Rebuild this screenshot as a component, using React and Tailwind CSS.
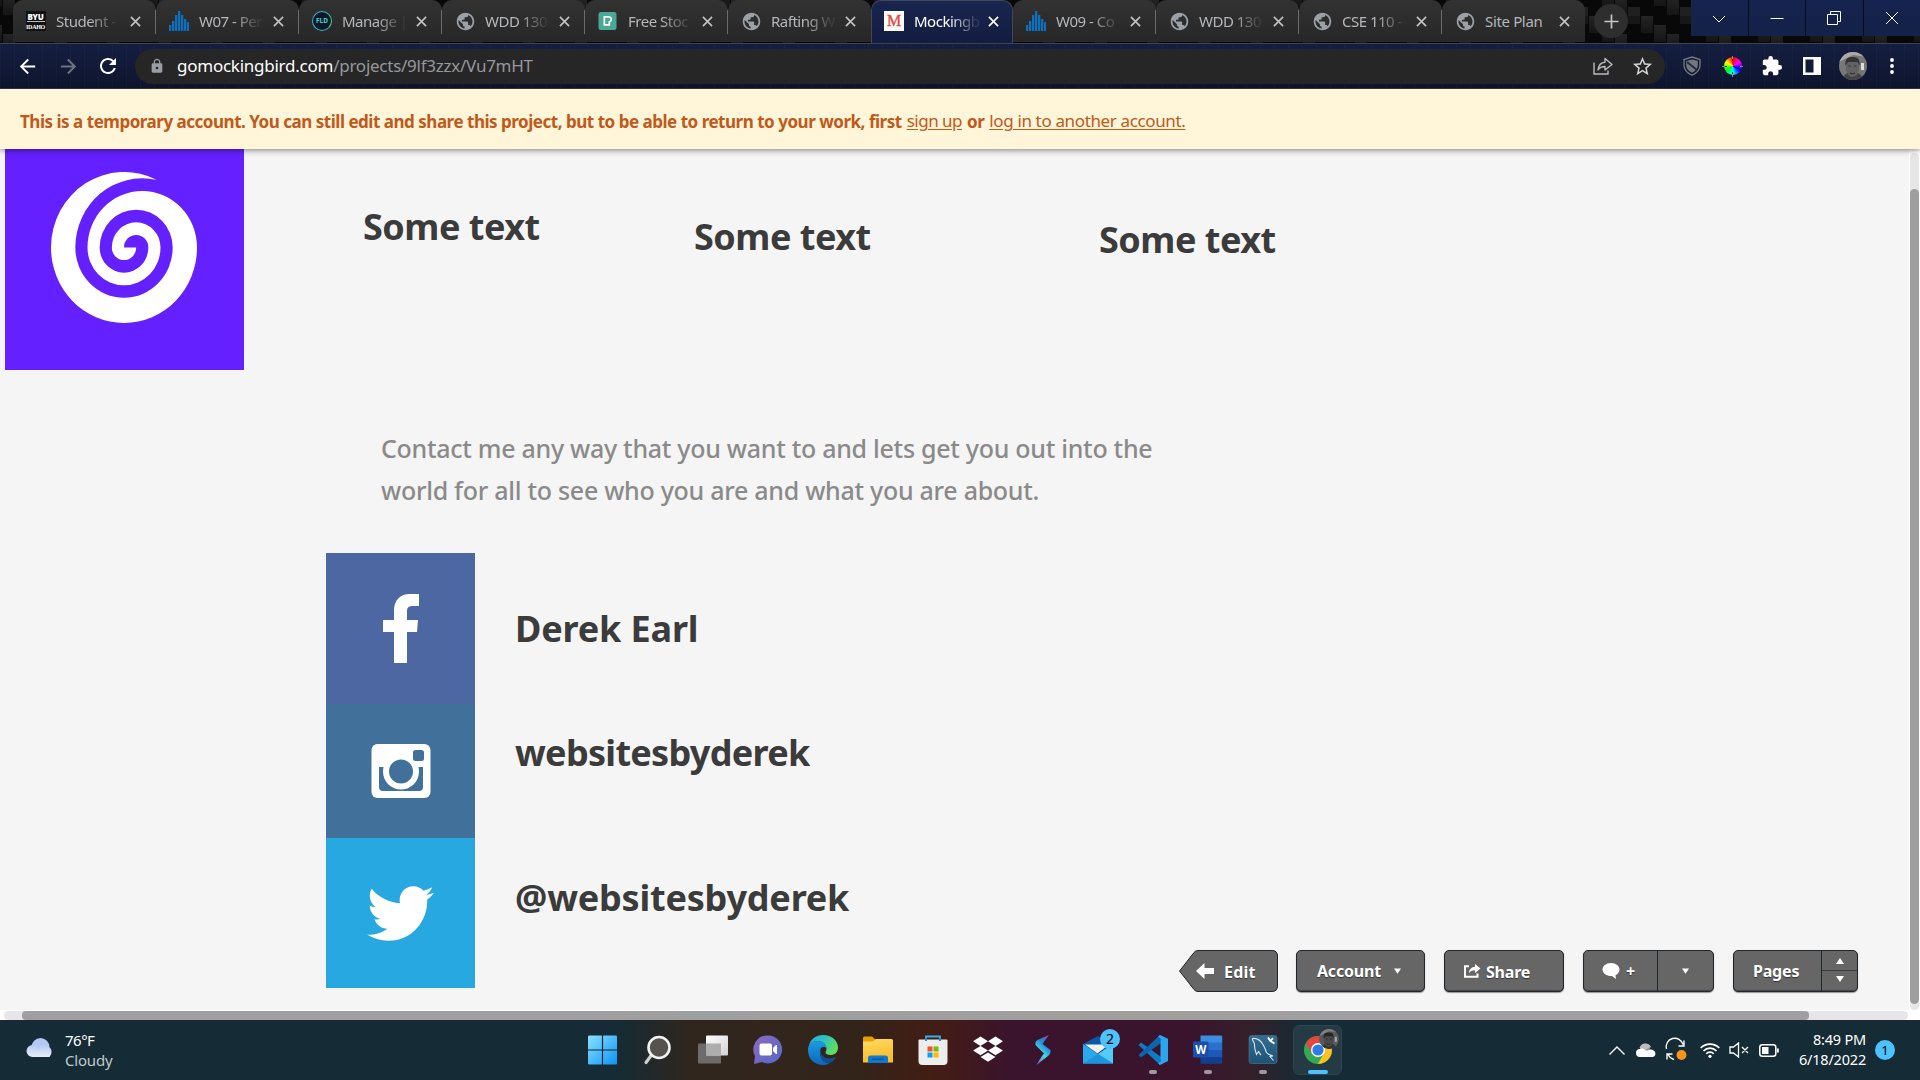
import React from "react";
import { MdPublic, MdExtension, MdLock, MdRefresh, MdArrowBack, MdArrowForward, MdStarBorder } from "react-icons/md";
import { FaTwitter } from "react-icons/fa";

const BarsIcon = () => (
  <svg viewBox="0 0 20 20" className="size-5" fill="#0b70bd">
    <path d="M0 14h2.300v6H0zM3 10h2.300v10H3zM6 4h2.300v16H6zM9 0h2.300v20H9zM12 4h2.300v16H12zM15 8h2.300v12H15zM18 11h2.300v9H18z" />
  </svg>
);

const ByuIcon = () => (
  <div className="-ml-px flex size-5 flex-col items-center bg-[#111] text-white">
    <span className="h-[10px] text-[8px] font-black leading-[11px] tracking-[-0.2px]">BYU</span>
    <span className="h-px w-[18px] bg-[#bbb]" />
    <span className="mt-[2px] font-['Liberation_Serif',serif] text-[6px] font-bold leading-[6px] tracking-[-0.3px]">IDAHO</span>
  </div>
);

const FldIcon = () => (
  <div className="flex size-5 items-center justify-center rounded-full border-[1.5px] border-[#35b3d4] border-r-[#3fd0a4] bg-[#0d1a24] text-[6.5px] font-extrabold text-[#3fc0d8]">
    FLD
  </div>
);

const PexelsIcon = () => (
  <svg viewBox="0 0 20 20" className="size-5">
    <rect x="0.5" y="1" width="18" height="18" rx="2.500" fill="#4aa896" />
    <path fillRule="evenodd" d="M5.500 5h5.300a3.300 3.300 0 0 1 1.400 6.300V14.800H5.500zM7.200 6.700v6.400h3.300V9.900h.5a1.600 1.600 0 0 0 0-3.200z" fill="#fff" />
  </svg>
);

const MIcon = () => (
  <div className="flex size-5 items-center justify-center bg-white font-['Liberation_Serif',serif] text-[16px] leading-5 text-[#e04a41] [-webkit-text-stroke:0.4px_#e04a41]">
    M
  </div>
);

const GlobeIcon = () => <MdPublic className="size-[21px] shrink-0 text-[#9aa0a6]" />;

const CloseX = ({ className }) => (
  <svg viewBox="0 0 12 12" className={className} stroke="currentColor" strokeWidth="1.8">
    <path d="M1 1l10 10M11 1L1 11" />
  </svg>
);

const tabs = [
  { icon: ByuIcon, title: "Student -" },
  { icon: BarsIcon, title: "W07 - Per" },
  { icon: FldIcon, title: "Manage |" },
  { icon: GlobeIcon, title: "WDD 130" },
  { icon: PexelsIcon, title: "Free Stoc" },
  { icon: GlobeIcon, title: "Rafting W" },
  { icon: MIcon, title: "Mockingb", active: true },
  { icon: BarsIcon, title: "W09 - Co" },
  { icon: GlobeIcon, title: "WDD 130" },
  { icon: GlobeIcon, title: "CSE 110 -" },
  { icon: GlobeIcon, title: "Site Plan", full: true },
];

function Tab({ icon: Icon, title, active, full, divider }) {
  return (
    <div
      className={
        active
          ? "relative flex h-[43px] w-[142px] items-center rounded-t-[10px] border border-b-0 border-[#42465a] bg-linear-to-b from-[#1a2550] to-[#131d40] pb-0.5 pl-[12px]"
          : "relative flex h-[42px] w-[143px] items-center rounded-t-[10px] bg-linear-to-b from-[#323232] to-[#272727] pl-[13px]"
      }
    >
      <div className="flex w-5 shrink-0 justify-center">
        <Icon />
      </div>
      <div
        className={
          (active ? "text-white " : "text-[#b4b6b9] ") +
          (full ? "tracking-[-0.35px] " : "tracking-[-0.5px] [mask-image:linear-gradient(to_right,black_52%,rgba(0,0,0,0.12)_92%)] ") +
          "ml-[10px] w-[66px] shrink-0 text-[15px] leading-5 whitespace-nowrap"
        }
      >
        {title}
      </div>
      <CloseX className={active ? "ml-[8px] size-[11px] text-white" : "ml-[8px] size-[11px] text-[#c0c2c4]"} />
      {divider && <span className="absolute right-0 top-[10px] h-6 w-px bg-[#6b6b6b]" />}
    </div>
  );
}

function CarbonPattern() {
  return (
    <svg className="absolute inset-0 size-full">
      <defs>
        <linearGradient id="weave" x1="0" x2="0" y1="0" y2="1">
          <stop offset="0" stopColor="#242424" />
          <stop offset="1" stopColor="#151515" />
        </linearGradient>
        <pattern id="carbon" width="52" height="36" x="1588" y="-20" patternUnits="userSpaceOnUse">
          <rect width="52" height="36" fill="#080808" />
          <rect x="1" width="12" height="17" fill="url(#weave)" />
          <rect x="14" y="9" width="12" height="17" fill="url(#weave)" />
          <rect x="27" y="18" width="12" height="17" fill="url(#weave)" />
          <rect x="40" y="27" width="12" height="9" fill="#202020" />
          <rect x="40" y="0" width="12" height="8" fill="#171717" />
        </pattern>
      </defs>
      <rect width="100%" height="100%" fill="url(#carbon)" />
    </svg>
  );
}

const controlIcons = [
  "M1 5l6 6 6-6",
  "M0.5 7.5h13",
  "M0.5 3.5h10v10h-10z M3.5 3.5v-3h10v10h-3",
  "M1 1l12 12M13 1L1 13",
];

function TabStrip() {
  return (
    <div className="relative flex h-[43px] bg-[#070707]">
      <CarbonPattern />
      <div className="relative flex pl-[13px]">
        {tabs.map((t, i) => (
          <Tab key={i} {...t} divider={i !== 5 && i !== 6 && i !== 10} />
        ))}
      </div>
      <div className="relative ml-[9px] mt-1 flex size-[34px] items-center justify-center rounded-full bg-[#2e2e2e]">
        <svg viewBox="0 0 16 16" className="size-[15px]" stroke="#c4c4c4" strokeWidth="1.8">
          <path d="M8 0.5v15M0.5 8h15" />
        </svg>
      </div>
      <div className="relative ml-auto flex h-9 w-[229px] gap-px bg-[#080d1c]">
        {controlIcons.map((d, i) => (
          <div key={i} className="flex flex-1 items-center justify-center bg-linear-to-b from-[#15234f] to-[#142148]">
            <svg viewBox="0 0 14 14" className="size-[14px]" fill="none" stroke="#fff" strokeWidth="1">
              <path d={d} />
            </svg>
          </div>
        ))}
      </div>
    </div>
  );
}

const Portrait = ({ className }) => (
  <svg viewBox="0 0 28 28" className={className}>
    <defs>
      <clipPath id="round">
        <circle cx="14" cy="14" r="14" />
      </clipPath>
    </defs>
    <g clipPath="url(#round)">
      <rect width="28" height="28" fill="#777" />
      <path d="M0 0h28v5L14 3 0 10z" fill="#aaa" />
      <rect x="22" y="11" width="3" height="7" fill="#ddd" />
      <path d="M4 28c1-7 5-8 10-8s9 2 10 8z" fill="#444" />
      <ellipse cx="13.500" cy="16" rx="6.500" ry="9" fill="#626262" />
      <path d="M6.500 14c-1-8 3-9 7-9s8 1 7 9l-2-4H9z" fill="#333" />
      <path d="M9.500 14h2.500M15 14h2.500M11 21q2.500 1.500 5 0" stroke="#333" strokeWidth="1.100" fill="none" />
    </g>
  </svg>
);

function Toolbar() {
  return (
    <div className="flex h-[46px] items-center border-y border-t-[#3f424d] border-b-[#3b3e49] bg-[repeating-linear-gradient(to_right,rgba(255,255,255,0.025)_0_1px,transparent_1px_14px),linear-gradient(to_bottom,#141e40,#0e152e)]">
      <MdArrowBack className="ml-4 size-[23px] text-white" />
      <MdArrowForward className="ml-[18px] size-[23px] text-[#6f7480]" />
      <MdRefresh className="ml-[16px] size-6 text-white" />
      <div className="ml-[15px] flex h-[35px] w-[1530px] items-center rounded-full bg-[#262626] pl-[14px] pr-[11px]">
        <MdLock className="size-4 text-[#9a9ea3]" />
        <div className="ml-[12px] text-[17px] leading-6 tracking-[-0.25px] text-[#95989c]">
          <span className="text-white">gomockingbird.com</span>/projects/9lf3zzx/Vu7mHT
        </div>
        <svg viewBox="0 0 20 18" className="ml-auto h-[18px] w-5" fill="none" stroke="#b9bbbe" strokeWidth="1.4">
          <path d="M1 5.500v11.500h14v-3.500" />
          <path d="M5 13c.5-5 3-7.500 7-7.800V1.500L19 7.500l-7 5.500V9.500c-3.500 0-5.500 1-7 3.500z" strokeLinejoin="round" />
        </svg>
        <MdStarBorder className="ml-[18px] size-[23px] text-[#cfd1d3]" />
      </div>
      <svg viewBox="0 0 20 20" className="ml-[17px] size-5" fill="none">
        <path d="M10 1l8 2.500v5.500c0 5-3 8-8 10.200C5 17 2 14 2 9V3.500z" stroke="#74777d" strokeWidth="1.400" />
        <path d="M10 3.500l5.800 1.600v4c0 3.600-2 6-5.800 7.600-3.800-1.600-5.800-4-5.800-7.600v-4z" fill="#74777d" />
        <path d="M5 6l10 8" stroke="#222a44" strokeWidth="1.800" />
      </svg>
      <div className="relative ml-5 flex size-[21px] items-center justify-center">
        <div className="size-[18px] rounded-full bg-[conic-gradient(#f00,#f0f_60deg,#00f_120deg,#0ff_180deg,#0f0_240deg,#ff0_300deg,#f00)]" />
        <svg viewBox="0 0 21 21" className="absolute inset-0 size-[21px]" fill="none" stroke="#8a8a90" strokeWidth="1">
          <path d="M10.500 0v3M10.500 18v3M0 10.500h3M18 10.500h3" />
          <path d="M10.500 3v2M10.500 16v2M3 10.500h2M16 10.500h2" stroke="#222" />
        </svg>
      </div>
      <MdExtension className="ml-[18px] size-[22px] text-white" />
      <svg viewBox="0 0 18 18" className="ml-5 size-[18px]">
        <path fillRule="evenodd" fill="#fff" d="M0 0h18v18H0zM2.500 2.500v13h8v-13z" />
      </svg>
      <Portrait className="ml-[18px] size-7" />
      <svg viewBox="0 0 4 16" className="ml-[23px] h-4 w-1" fill="#fff">
        <circle cx="2" cy="2" r="1.900" />
        <circle cx="2" cy="8" r="1.900" />
        <circle cx="2" cy="14" r="1.900" />
      </svg>
    </div>
  );
}

function Banner() {
  return (
    <div className="relative z-10 flex h-[60px] items-center bg-[#fff5d9] pl-5 pt-[5px] text-[17px] leading-6 text-[#bf5a1b] shadow-[0_1px_6px_rgba(0,0,0,0.5)]">
      <span className="font-bold tracking-[-0.48px]">
        This is a temporary account. You can still edit and share this project, but to be able to return to your work, first
      </span>
      <span className="-mt-px ml-[5px] tracking-[-0.5px] underline underline-offset-2">sign up</span>
      <span className="ml-[5px] font-bold tracking-[-0.5px]">or</span>
      <span className="-mt-px ml-[5px] tracking-[-0.36px] underline underline-offset-2">log in to another account.</span>
    </div>
  );
}

const SwirlLogo = () => (
  <svg viewBox="-6 -6 12 12" preserveAspectRatio="none" className="mr-px h-[151px] w-[146px]" fill="#fff">
    <path d="M2.667-5.375A6 6 0 0 0-6 0A6 6 0 0 0 6 0A4.500 4.500 0 0 0-3 0A3 3 0 0 0 3 0A2 2 0 0 0-1 0A1 1 0 0 0 1 0H0A1 1 0 0 1 2 0A2 2 0 0 1-2 0A3 3 0 0 1 4 0A4 4 0 0 1-4 0A5.500 5.500 0 0 1 2.667-5.375z" />
  </svg>
);

const InstagramIcon = () => (
  <svg viewBox="0 0 60 55" className="h-[55px] w-[60px]">
    <rect x="0.500" y="0" width="59" height="54" rx="6" fill="#fff" />
    <path d="M8 23h6a17 17 0 0 0 32 0h6v20a4 4 0 0 1-4 4H12a4 4 0 0 1-4-4z" fill="#41719a" />
    <circle cx="30" cy="27.500" r="18" fill="#fff" />
    <circle cx="30" cy="27.500" r="12" fill="#41719a" />
    <rect x="42" y="6" width="11" height="11" rx="2.500" fill="#41719a" />
  </svg>
);

const socials = [
  {
    tile: "flex h-[151px] w-[149px] items-center justify-center bg-[#4c67a1]",
    label: "pt-[56px] tracking-[-0.15px]",
    icon: (
      <svg viewBox="0 0 36 69" className="h-[69px] w-9" fill="#fff">
        <path d="M11 69V38H0V26h11V17C11 6 17 0 27 0h9v12h-6c-5 0-6 2-6 6v8h11l-1 12H24v31z" />
      </svg>
    ),
    text: "Derek Earl",
  },
  {
    tile: "flex h-[134px] w-[149px] items-center justify-center bg-[#41719a]",
    label: "pt-[29px] tracking-[-0.7px]",
    icon: <InstagramIcon />,
    text: "websitesbyderek",
  },
  {
    tile: "flex h-[150px] w-[149px] items-center justify-center bg-[#27a8e0]",
    label: "pt-[40px] tracking-[-0.2px]",
    icon: <FaTwitter className="h-[69px] w-[67px] text-white" />,
    text: "@websitesbyderek",
  },
];

const btn = "flex h-[42px] items-center rounded-[5px] border border-[#20262b] bg-[#666] shadow-[0_1px_1px_rgba(0,0,0,0.4),inset_0_-1px_1px_rgba(0,0,0,0.3)]";

const Tri = ({ className }) => (
  <svg viewBox="0 0 8 6" className={className} fill="#fff">
    <path d="M0 0h8L4 6z" />
  </svg>
);

function ProjectBar() {
  return (
    <div className="absolute left-[1179px] top-[801px] flex items-center text-[16px] font-bold leading-6 tracking-[-0.2px] text-white [text-shadow:0_1px_1px_rgba(0,0,0,0.5)]">
      <div className="relative flex h-[42px] w-[99px] items-center">
        <svg viewBox="0 0 99 43" className="absolute left-0 top-0 h-[43px] w-[99px]">
          <path d="M0.500 21L15 2.500Q16.500 0.500 19 0.500H93Q98.500 0.500 98.500 6V36Q98.500 41.500 93 41.500H19Q16.500 41.500 15 39.500Z" fill="#666" stroke="#20262b" />
        </svg>
        <svg viewBox="0 0 18 16" className="relative ml-[17px] h-4 w-[18px]" fill="#fff">
          <path d="M0 8L8.500 0v5H18v6H8.500v5z" />
        </svg>
        <span className="relative ml-[10px] pt-px tracking-[0.2px]">Edit</span>
      </div>
      <div className={btn + " ml-[18px] w-[129px] pl-5"}>
        <span className="w-[67px]">Account</span>
        <Tri className="ml-[10px] h-1.5 w-[7px]" />
      </div>
      <div className={btn + " ml-[19px] w-[120px] pl-[19px]"}>
        <svg viewBox="0 0 17 14" className="h-3.5 w-[17px]" fill="none" stroke="#fff" strokeWidth="2">
          <path d="M5 2.200H1v10.600h12.500V9.500" />
          <path d="M11 0l5.500 4.500L11 9V6.200c-3 0-4.500.8-6 3C5 5.500 7.500 3 11 2.800z" fill="#fff" stroke="none" />
        </svg>
        <span className="ml-[5px] pt-px">Share</span>
      </div>
      <div className={btn + " ml-[19px] w-[131px]"}>
        <div className="flex h-full w-[74px] items-center border-r border-[#20262b] pl-[18px]">
          <svg viewBox="0 0 18 16" className="h-4 w-[18px]" fill="#fff">
            <path d="M9 0c5 0 8.500 3 8.500 6.500 0 2.500-1.500 4.500-4 5.700L14 16l-4-3C5 13.300.5 10.500.5 6.500.5 3 4 0 9 0z" />
          </svg>
          <span className="ml-[6px]">+</span>
        </div>
        <Tri className="ml-6 h-1.5 w-[7px]" />
      </div>
      <div className={btn + " ml-[19px] w-[125px]"}>
        <div className="flex h-full w-[88px] items-center border-r border-[#20262b] pl-[19px]">Pages</div>
        <div className="flex h-full flex-1 flex-col">
          <div className="flex flex-1 items-center justify-center border-b border-[#3a3d40] pt-0.5">
            <Tri className="h-[6px] w-2 rotate-180" />
          </div>
          <div className="flex flex-1 items-center justify-center pb-1">
            <Tri className="h-[6px] w-2" />
          </div>
        </div>
      </div>
    </div>
  );
}

function Page() {
  return (
    <div className="flex h-[871px] flex-col bg-white">
      <div className="flex h-[861px]">
        <div className="relative w-[1909px] bg-[#f5f5f5] font-bold text-[#3b3b3b]">
          <div className="flex h-[404px] flex-col">
            <div className="flex h-[221px] pl-[5px] text-[36px] leading-10 tracking-[-0.5px] whitespace-nowrap">
              <div className="flex h-[221px] w-[239px] justify-center bg-[#6520ff] pt-[23px]">
                <SwirlLogo />
              </div>
              <div className="ml-[119px] w-[331px] pt-[58px]">Some text</div>
              <div className="w-[405px] pt-[68px]">Some text</div>
              <div className="pt-[71px]">Some text</div>
            </div>
            <p className="ml-[381px] mt-[57px] w-[800px] text-[25px] font-medium leading-[42px] tracking-[-0.28px] text-[#8a8a8a]">
              Contact me any way that you want to and lets get you out into the
              <br />
              world for all to see who you are and what you are about.
            </p>
          </div>
          <div className="flex flex-col pl-[326px]">
            {socials.map((s) => (
              <div key={s.text} className="flex">
                <div className={s.tile}>{s.icon}</div>
                <div className={"ml-[40px] text-[36px] leading-10 " + s.label}>{s.text}</div>
              </div>
            ))}
          </div>
          <ProjectBar />
        </div>
        <div className="flex flex-1 flex-col items-center pt-1">
          <div className="flex w-[9px] flex-1 flex-col rounded-full bg-[#e6e6e6] pt-9">
            <div className="h-[815px] rounded-full bg-[#9f9f9f]" />
          </div>
        </div>
      </div>
      <div className="flex h-[10px] items-end px-1">
        <div className="mr-2 flex h-[9px] flex-1 rounded-full bg-[#e6e6e6] pl-[18px]">
          <div className="h-full w-[1787px] rounded-[4px] bg-[#9f9f9f]" />
        </div>
      </div>
    </div>
  );
}

const taskIcons = [
  <g key="start">
    <defs>
      <linearGradient id="win" x1="0" y1="0" x2="1" y2="1">
        <stop offset="0" stopColor="#8ce2ff" />
        <stop offset="1" stopColor="#0c93f5" />
      </linearGradient>
    </defs>
    <rect x="0" y="0.500" width="29" height="29" rx="1.200" fill="url(#win)" />
    <path d="M14.500 0v30M0 15h30" stroke="#13262f" strokeWidth="1.200" />
  </g>,
  <g key="search">
    <path d="M8.500 20L3 27.500" stroke="#cfcfcf" strokeWidth="3.200" strokeLinecap="round" />
    <circle cx="16" cy="12.500" r="10.500" fill="#57524e" stroke="#f2f2f2" strokeWidth="2.600" />
  </g>,
  <g key="view">
    <defs>
      <linearGradient id="tv" x1="0" y1="0" x2="1" y2="1">
        <stop offset="0" stopColor="#fff" />
        <stop offset="1" stopColor="#d2d2d2" />
      </linearGradient>
    </defs>
    <rect x="0" y="8.500" width="23" height="20" rx="1" fill="#6d6c6b" />
    <rect x="8" y="0.500" width="22" height="20" rx="1" fill="url(#tv)" />
    <path d="M8 8.500h15v12H8z" fill="#adadad" />
  </g>,
  <g key="chat">
    <defs>
      <linearGradient id="ch" x1="0" y1="0" x2="1" y2="1">
        <stop offset="0" stopColor="#8d6ac0" />
        <stop offset="1" stopColor="#5468c9" />
      </linearGradient>
    </defs>
    <path d="M15 0.500a14 14 0 1 1-6 26.600L1 29l1-8A14 14 0 0 1 15 0.500z" fill="url(#ch)" />
    <rect x="6.500" y="8.500" width="12.500" height="12" rx="2" fill="#fff" />
    <path d="M20.500 13l3-3v9l-3-3z" fill="#fff" stroke="#fff" strokeLinejoin="round" />
  </g>,
  <g key="edge">
    <defs>
      <linearGradient id="e1" x1="0" y1="0" x2="1" y2="0.500">
        <stop offset="0" stopColor="#2aa8e0" />
        <stop offset="0.500" stopColor="#2cc3c4" />
        <stop offset="1" stopColor="#62de5c" />
      </linearGradient>
      <linearGradient id="e2" x1="0" y1="0" x2="0" y2="1">
        <stop offset="0" stopColor="#1b9be3" />
        <stop offset="1" stopColor="#0f66b8" />
      </linearGradient>
    </defs>
    <path d="M0.500 12C2 4 8 0 15 0c9 0 15 6 15 12.500 0 5-3.500 7.500-7.500 7.500-3 0-5-1-5-2.500 0-1 1-1.500 1-4C18.500 9 14 6 9.500 6 5 6 1.500 8.500 0.500 12z" fill="url(#e1)" />
    <path d="M0 15C0 9 4 6 9.500 6c5 0 9 3 9 7.500-1-2-5-2.500-6 .5-2 6 2 15 9 14-2 1.500-4 2-6.500 2C6 30 0 23.500 0 15z" fill="url(#e2)" />
    <path d="M12.500 14c-2 6 1.500 13.500 7.500 14.500 4-.8 6.500-3.500 7.500-5.500.5-1-.3-1.200-1-.8C19 25.500 12 21.500 12.500 14z" fill="#0d4f97" />
  </g>,
  <g key="files">
    <defs>
      <linearGradient id="fo" x1="0" y1="0" x2="0.300" y2="1">
        <stop offset="0" stopColor="#ffdb62" />
        <stop offset="1" stopColor="#f8bd2c" />
      </linearGradient>
    </defs>
    <path d="M0 3a1.500 1.500 0 0 1 1.500-1.500H9L13 5v6H0z" fill="#e3a008" />
    <path d="M0 6.500h9.500L13 4h15.500A1.500 1.500 0 0 1 30 5.500V27.500H0z" fill="url(#fo)" />
    <path d="M5 28v-5a2.500 2.500 0 0 1 2.500-2.500h15A2.500 2.500 0 0 1 25 23v5z" fill="#0f78cf" />
    <path d="M9 24.200h12" stroke="#0b4e8c" strokeWidth="1.300" />
  </g>,
  <g key="store">
    <path d="M8 5V1.500h14V5" fill="none" stroke="#2fb2f0" strokeWidth="1.800" />
    <path d="M0.500 5.500a1 1 0 0 1 1-1h27a1 1 0 0 1 1 1V26a4 4 0 0 1-4 4h-21a4 4 0 0 1-4-4z" fill="#ededed" />
    <path d="M8 6V3M22 6V3" stroke="#1688cc" strokeWidth="1.800" />
    <rect x="9.500" y="11.500" width="5" height="5" fill="#f25022" />
    <rect x="15.500" y="11.500" width="5" height="5" fill="#7fba00" />
    <rect x="9.500" y="17.500" width="5" height="5" fill="#00a4ef" />
    <rect x="15.500" y="17.500" width="5" height="5" fill="#ffb900" />
  </g>,
  <g key="dropbox" fill="#fff">
    <path d="M7.500 1.500L15 6.200l-7.500 4.700L0 6.200zM22.500 1.500L30 6.200l-7.500 4.700L15 6.200zM7.500 10.900L15 15.600l-7.500 4.700L0 15.600zM22.500 10.900L30 15.600l-7.500 4.700L15 15.600zM15 17.500l7.500 4.500-7.500 4.700L7.500 22z" />
  </g>,
  <g key="bolt">
    <defs>
      <linearGradient id="bo" x1="0.800" y1="0" x2="0.300" y2="1">
        <stop offset="0" stopColor="#7d58a8" />
        <stop offset="0.350" stopColor="#1e8fe0" />
        <stop offset="0.650" stopColor="#52d8d8" />
        <stop offset="1" stopColor="#6b6bd8" />
      </linearGradient>
    </defs>
    <path d="M21 0L9.500 5Q7 6.500 7.500 10L16 18.500Q13 22 8.500 30L20 21Q23 18.500 22.500 15L14.500 9Q17 5 21 0z" fill="url(#bo)" />
  </g>,
  <g key="mail">
    <path d="M0 9L15 1l15 8v6H0z" fill="#0d56a8" />
    <path d="M0 9l15 10L30 9v19.500H0z" fill="#2aa9ec" />
    <path d="M15 19L30 9v19.500z" fill="#52cbf8" />
    <path d="M0 28.500L15 19l15 9.500z" fill="#1d95dd" />
    <path d="M2 9.500h24L14.500 18.500z" fill="#f1f1f1" />
  </g>,
  <g key="code">
    <path d="M3 7.500L0.500 10 22 30l1-8z" fill="#0d7cc5" />
    <path d="M3 22.500L0.500 20 22 0l1 8z" fill="#0b66b0" />
    <path d="M22 0l8 3.800V26L22 30l-2-1.500 2.500-2V3.500L20 1.500z" fill="#2ba5ee" />
  </g>,
  <g key="word">
    <path d="M7.500 0.500H28a1.200 1.200 0 0 1 1.200 1.200V8H7.500z" fill="#3a8de0" />
    <path d="M7.500 7.500h21.700v7.500H7.500z" fill="#2a70cd" />
    <path d="M7.500 15h21.700v7H7.500z" fill="#1c59b8" />
    <path d="M7.500 22h21.700v5.500a1.200 1.200 0 0 1-1.200 1.200H7.500z" fill="#12408f" />
    <rect x="0" y="6.500" width="15.500" height="16" rx="1.200" fill="#1a4fae" />
    <text x="7.700" y="18.500" textAnchor="middle" fontSize="11.500" fontWeight="700" fill="#fff">W</text>
  </g>,
  <g key="sql">
    <defs>
      <linearGradient id="sq" x1="0" y1="0" x2="0" y2="1">
        <stop offset="0" stopColor="#346d92" />
        <stop offset="1" stopColor="#1f5274" />
      </linearGradient>
    </defs>
    <rect x="1" y="0.500" width="28" height="28" rx="2.500" fill="url(#sq)" stroke="#4c7a97" strokeWidth="0.600" />
    <path d="M4.500 3.500c4-.5 8 2 10.500 6 1.500 2.500 2.500 5 3.500 8 1 1.500 3 2.500 6.500 3.500l-3 .5 3.500 4M4.500 3.500c-.5 2 1.500 3 2 6 .3 2.500 0 4.500 1 6.500l1 3.500 2-3c1 1 1 2 2.500 3.500" stroke="#dde8ef" strokeWidth="1.100" fill="none" />
    <path d="M20 2.500l2.500 3.500 4 2.500M22.500 6l2.500-3" stroke="#fff" strokeWidth="1.900" />
  </g>,
  <g key="chrome">
    <circle cx="15" cy="15" r="14" fill="#36a853" />
    <path d="M27.120 8A14 14 0 0 1 15 29L21 18V8z" fill="#fcc31e" />
    <path d="M15 8h12.100A14 14 0 0 0 2.880 8L9 18.500z" fill="#e8453c" />
    <circle cx="15" cy="15" r="7" fill="#fff" />
    <circle cx="15" cy="15" r="5.600" fill="#2a7de9" />
  </g>,
];

function Taskbar() {
  return (
    <div className="flex h-[60px] bg-[linear-gradient(to_right,#152b35_0,#152b35_615px,#30261e_690px,#33241a_860px,#431d13_935px,#3a142d_1010px,#3a142d_1190px,#33202a_1250px,#152b35_1305px,#152b35_1920px)]">
      <div className="flex w-[575px] items-center pl-[26px]">
        <svg viewBox="0 0 30 20" className="mb-1 h-5 w-[30px]">
          <defs>
            <linearGradient id="cl" x1="0" y1="0" x2="0" y2="1">
              <stop offset="0" stopColor="#b4cbf5" />
              <stop offset="1" stopColor="#e8eef6" />
            </linearGradient>
          </defs>
          <circle cx="14.500" cy="9" r="9" fill="#b3c9f3" />
          <path d="M6.500 7a6.500 6.500 0 0 1 6 4.500A6.800 6.800 0 1 1 23.500 19H6.500a6 6 0 0 1 0-12z" fill="url(#cl)" />
        </svg>
        <div className="ml-[9px] text-[15px] leading-5">
          <div className="tracking-[-0.5px] text-white">76°F</div>
          <div className="tracking-[-0.2px] text-[#c0c9cd]">Cloudy</div>
        </div>
      </div>
      <div className="flex">
        {taskIcons.map((g, i) => (
          <div key={i} className="relative flex w-[55px] items-center justify-center">
            {i === 13 && <div className="absolute inset-x-[3px] inset-y-[5px] rounded-md border border-[#2d4550] bg-[#243a45]" />}
            <svg viewBox="0 0 30 30" className="relative size-[30px] overflow-visible">{g}</svg>
            {i === 9 && (
              <span className="absolute right-[5px] top-[9px] flex size-5 items-center justify-center rounded-full bg-[#4cc2ff] text-[14px] leading-5 text-black">
                2
              </span>
            )}
            {i === 13 && <Portrait className="absolute right-[6px] top-[9px] size-5 brightness-75" />}
            {i > 9 && i < 13 && <span className="absolute bottom-[6px] h-1 w-2 rounded-full bg-[#a199a0]" />}
            {i === 13 && <span className="absolute bottom-[6px] h-1 w-5 rounded-full bg-[#4cc2ff]" />}
          </div>
        ))}
      </div>
      <div className="ml-auto flex items-center pr-[25px] text-white">
        <svg viewBox="0 0 16 9" className="h-[9px] w-4" fill="none" stroke="#fff" strokeWidth="1.400">
          <path d="M0.500 8.500L8 1l7.500 7.500" />
        </svg>
        <svg viewBox="0 0 20 14" className="ml-[11px] h-3.5 w-5">
          <path d="M4 7A6 6 0 0 1 15 3.500L12 9z" fill="#9a9a9a" />
          <path d="M3.500 5A6 6 0 0 1 14.500 3.500L9 7z" fill="#bdbdbd" />
          <path d="M4 14a4 4 0 0 1 0-8c2-1 4 0 5 .8l2 1.200c2-1.500 5-2 6.500-.5A3.500 3.500 0 0 1 17 14z" fill="#fff" />
        </svg>
        <svg viewBox="0 0 20 20" className="ml-[10px] size-5 overflow-visible" fill="none" stroke="#fff" strokeWidth="1.400">
          <path d="M0.500 9A8.500 8.500 0 0 1 17 4.500M18 0.500v5.500h-5.500M8 19.500A9 9 0 0 1 2 14M1 19.500V14h5.500" />
          <circle cx="15.500" cy="15" r="5" fill="#f7941d" stroke="none" />
        </svg>
        <svg viewBox="0 0 20 16" className="ml-[14px] h-4 w-5" fill="none" stroke="#fff" strokeWidth="1.700">
          <path d="M0.700 6a13 13 0 0 1 18.600 0M3.500 9a9 9 0 0 1 13 0M6.300 11.800a5 5 0 0 1 7.400 0" />
          <circle cx="10" cy="14.300" r="1.600" fill="#fff" stroke="none" />
        </svg>
        <svg viewBox="0 0 20 16" className="ml-[9px] h-4 w-5" fill="none" stroke="#fff" strokeWidth="1.300">
          <path d="M1 5h3.500L9.500 1v14l-5-4H1zM13 5l6 6M19 5l-6 6" />
        </svg>
        <svg viewBox="0 0 20 13" className="ml-[10px] h-[13px] w-5" fill="none" stroke="#fff" strokeWidth="1.500">
          <rect x="0.800" y="0.800" width="16" height="11.400" rx="2.500" />
          <path d="M3 3h6.500v7H3z" fill="#fff" stroke="none" />
          <path d="M18.800 4.500v4" strokeWidth="2" />
        </svg>
        <div className="ml-[20px] pb-[2px] text-right text-[14.5px] leading-5 tracking-[-0.2px]">
          <div>8:49 PM</div>
          <div>6/18/2022</div>
        </div>
        <div className="ml-[9px] flex size-5 items-center justify-center rounded-full bg-[#4cc2ff] text-[13px] leading-5 text-black">1</div>
      </div>
    </div>
  );
}

export default function App() {
  return (
    <div className="flex h-[1080px] w-[1920px] flex-col overflow-hidden bg-white font-['Noto_Sans',sans-serif]">
      <TabStrip />
      <Toolbar />
      <Banner />
      <Page />
      <Taskbar />
    </div>
  );
}
